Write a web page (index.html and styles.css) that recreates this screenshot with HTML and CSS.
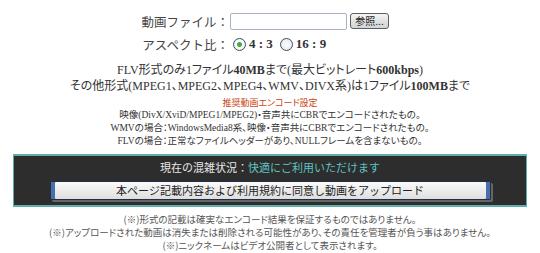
FILE: index.html
```html
<!DOCTYPE html>
<html lang="ja">
<head>
    <meta charset="UTF-8">
    <title>動画アップロード</title>
    <link rel="stylesheet" href="styles.css">
</head>
<body>
    <div class="upload">
        <div class="upload-form">
            <label class="form-label" for="file-name">動画ファイル：</label>
            <div class="form-field">
                <input type="text" id="file-name" class="file-box">
                <button class="browse">参照...</button>
            </div>
            <span class="form-label">アスペクト比：</span>
            <div class="form-field">
                <label class="aspect"><input type="radio" name="aspect" checked><b>4 : 3</b></label>
                <label class="aspect"><input type="radio" name="aspect"><b>16 : 9</b></label>
            </div>
        </div>

        <p class="limit">FLV形式のみ1ファイル<b>40MB</b>まで(最大ビットレート<b>600kbps</b>)<br>その他形式(MPEG1、MPEG2、MPEG4、WMV、DIVX系)は1ファイル<b>100MB</b>まで</p>

        <div class="encode">
            <h3>推奨動画エンコード設定</h3>
            <p>映像(DivX/XviD/MPEG1/MPEG2)・音声共にCBRでエンコードされたもの。</p>
            <p>WMVの場合：WindowsMedia8系、映像・音声共にCBRでエンコードされたもの。</p>
            <p>FLVの場合：正常なファイルヘッダーがあり、NULLフレームを含まないもの。</p>
        </div>

        <div class="status-bar">
            <p class="status">現在の混雑状況：<span class="status-ok">快適にご利用いただけます</span></p>
            <button class="upload-btn">本ページ記載内容および利用規約に同意し動画をアップロード</button>
        </div>

        <div class="notes">
            <p>(※)形式の記載は確実なエンコード結果を保証するものではありません。</p>
            <p>(※)アップロードされた動画は消失または削除される可能性があり、その責任を管理者が負う事はありません。</p>
            <p>(※)ニックネームはビデオ公開者として表示されます。</p>
        </div>
    </div>
</body>
</html>
```

FILE: styles.css
```css
body {
    margin: 0;
    background-color: #fff;
    color: #333;
    font-family: "Liberation Serif", "Noto Sans CJK JP", serif;
}
.upload {
    width: 540px;
}
.upload-form {
    display: grid;
    grid-template-columns: 229px 1fr;
    grid-auto-rows: 18px;
    row-gap: 5px;
    align-items: center;
    padding-top: 12px;
}
.form-label {
    text-align: right;
    font-family: "Noto Sans CJK JP", sans-serif;
    font-size: 12.5px;
    color: #444;
}
.form-field {
    display: flex;
    align-items: center;
    padding-left: 1px;
}
.file-box {
    box-sizing: border-box;
    width: 117px;
    height: 17px;
    margin: 0;
    padding: 0 2px;
    border: 1px solid #a9b4c2;
    border-radius: 2px;
}
.browse {
    box-sizing: border-box;
    width: 39px;
    height: 16px;
    margin-left: 3px;
    padding: 0;
    font-family: "Noto Sans CJK JP", sans-serif;
    font-size: 10px;
    line-height: 14px;
    color: #222;
    border: 1px solid #5a5f66;
    border-radius: 3px;
    background: linear-gradient(#f6f6f6, #e2e2e2 50%, #d4d4d4);
}
.aspect {
    display: flex;
    align-items: center;
    margin-right: 4px;
    font-size: 13px;
    color: #333;
}
.aspect input {
    appearance: none;
    box-sizing: border-box;
    width: 13px;
    height: 13px;
    margin: 0 3px 0 3px;
    border: 1px solid #3d4d66;
    border-radius: 50%;
    background: radial-gradient(#ffffff, #dde3ea);
}
.aspect input:checked {
    background: radial-gradient(circle, #3fae3f 0, #3fae3f 2px, #ffffff 3px, #dde3ea);
}
.limit {
    margin: 9px 0 0;
    text-align: center;
    font-size: 12px;
    line-height: 16px;
    color: #333;
    font-feature-settings: "palt";
}
.encode {
    margin-top: 3px;
    text-align: center;
    font-feature-settings: "palt";
}
.encode h3 {
    margin: 0;
    font-family: "Noto Sans CJK JP", sans-serif;
    font-size: 9px;
    font-weight: normal;
    line-height: 12px;
    color: #cc4411;
}
.encode p {
    margin: 0;
    font-size: 9.5px;
    line-height: 13px;
    color: #333;
}
.status-bar {
    margin: 6px 13px 0;
    padding: 4px 0 5px;
    background-color: #2d2d2d;
    border: 2px solid #5eaeae;
    border-left-width: 1px;
    border-right-width: 1px;
    text-align: center;
}
.status {
    margin: 0;
    font-family: "Noto Sans CJK JP", sans-serif;
    font-size: 11px;
    line-height: 14px;
    color: #e8e8e8;
}
.status-ok {
    color: #5cc4c4;
}
.upload-btn {
    display: block;
    box-sizing: border-box;
    width: 441px;
    height: 19px;
    margin: 7px auto 0;
    padding: 0;
    font-family: "Noto Sans CJK JP", sans-serif;
    font-size: 11px;
    line-height: 17px;
    color: #222;
    border: 1px solid #1f2f4a;
    border-radius: 2px;
    background: linear-gradient(#fbfbfb, #ececec 50%, #dedede);
    box-shadow: inset 4px 0 0 #4a6ea8, inset -4px 0 0 #4a6ea8, 2px 2px 0 #666;
}
.notes {
    margin-top: 6px;
    text-align: center;
    font-feature-settings: "palt";
}
.notes p {
    margin: 0;
    font-family: "Noto Sans CJK JP", sans-serif;
    font-size: 9.5px;
    line-height: 13px;
    color: #555;
}
```
